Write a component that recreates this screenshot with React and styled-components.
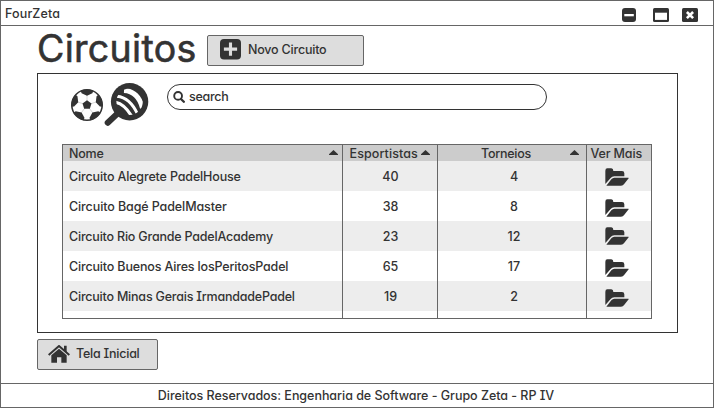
import React from "react";
import styled, { createGlobalStyle } from "styled-components";

const ink = "#333";
const line = "#666";

const GlobalStyle = createGlobalStyle`
  *, *::before, *::after { box-sizing: border-box; }
  body {
    margin: 0;
    background: #fff;
    color: ${ink};
    font: 500 12.5px/16px Inter, "Liberation Sans", sans-serif;
    font-feature-settings: "cv11", "cv08";
  }
  svg { display: block; flex: none; }
`;

const Window = styled.div`
  display: flex;
  flex-direction: column;
  width: 714px;
  height: 408px;
  border: 1px solid ${line};
  background: #fff;
`;

const TitleBar = styled.header`
  display: flex;
  align-items: center;
  justify-content: space-between;
  height: 25px;
  padding: 2px 15px 0 4px;
  border-bottom: 1px solid ${line};
`;

const WindowControls = styled.div`
  display: flex;
  align-items: center;
  padding-top: 2px;
`;

const ControlIcon = styled.svg`
  margin-left: ${(p) => p.$gap || 0}px;
`;

const Label = styled.span`
  white-space: nowrap;
  letter-spacing: ${(p) => p.$track || 0}px;
`;

const Main = styled.main`
  flex: 1;
  display: flex;
  flex-direction: column;
  align-items: flex-start;
  padding-left: 36px;
`;

const Heading = styled.div`
  display: flex;
  align-items: flex-start;
  height: 47px;
`;

const PageTitle = styled.h1`
  width: 170px;
  margin: 0;
  font-size: 37.5px;
  font-weight: 400;
  line-height: 46px;
  letter-spacing: 0.3px;
  white-space: nowrap;
  -webkit-text-stroke: 0.6px ${ink};
`;

const Button = styled.button`
  display: flex;
  align-items: center;
  width: ${(p) => p.$width}px;
  height: 31px;
  margin: ${(p) => p.$top}px 0 0;
  padding: 0 0 2px ${(p) => p.$inset}px;
  gap: ${(p) => p.$gap}px;
  border: 1px solid ${line};
  border-radius: 2px;
  background: #ddd;
  color: inherit;
  font: inherit;
  font-feature-settings: inherit;
`;

const Panel = styled.section`
  width: 641px;
  height: 260px;
  border: 1px solid ${ink};
  padding: 7px 24px 0;
`;

const SearchRow = styled.div`
  display: flex;
  align-items: flex-start;
  height: 63px;
  padding-left: 8px;
`;

const SportIcons = styled.div`
  display: flex;
  width: 97px;
`;

const SearchField = styled.div`
  display: flex;
  align-items: center;
  gap: 4px;
  width: 380px;
  height: 26px;
  margin-top: 3px;
  padding-left: 5px;
  border: 1px solid ${ink};
  border-radius: 13px;
`;

const Table = styled.div`
  display: flex;
  width: 590px;
  height: 175px;
  border: 1px solid ${line};
`;

const Column = styled.div`
  width: ${(p) => p.$width}px;
  border-right: 1px solid ${line};
  &:last-child { border-right: 0; }
`;

const HeadCell = styled.div`
  display: flex;
  align-items: center;
  height: 16px;
  padding: 0 ${(p) => p.$end || 4}px 0 ${(p) => p.$inset}px;
  background: #ccc;
`;

const HeadText = styled.div`
  flex: 1;
  padding-top: 2px;
  text-align: ${(p) => p.$align || "left"};
`;

const Cell = styled.div`
  display: flex;
  align-items: center;
  justify-content: ${(p) => (p.$center ? "center" : "flex-start")};
  height: 30px;
  padding: 2px 0 0 ${(p) => p.$inset || 0}px;
  &:nth-child(even) { background: #ededed; }
`;

const FolderCell = styled(Cell)`
  align-items: flex-start;
  padding: ${(p) => p.$drop}px 0 0 18px;
`;

const Footer = styled.footer`
  display: flex;
  align-items: center;
  justify-content: center;
  height: 24px;
  padding-right: 2px;
  border-top: 1px solid ${line};
`;

const SortArrow = () => (
  <svg width="9" height="6" viewBox="0 0 9 6">
    <path d="M4.5 0 9 4.2V5H0v-.8z" fill={ink} />
  </svg>
);

const FolderIcon = () => (
  <svg width="24" height="18" viewBox="0 0 72 54" fill={ink}>
    <path d="M1 48V8Q1 1 7 1h12q6 0 6 8h26q7 0 7 7v9H28q-7 0-11 5z" />
    <path d="M4 53 19 34q4-5 9-5h42q2 0 1 2L58 47q-4 6-10 6z" />
  </svg>
);

const PlusIcon = () => (
  <svg width="21" height="21" viewBox="0 0 21 21">
    <rect width="21" height="20.5" rx="4" fill={ink} />
    <path d="M10.5 3.5v13.2M3.9 10.1h13.2" stroke="#ddd" strokeWidth="3.1" />
  </svg>
);

const HomeIcon = () => (
  <svg width="22" height="18" viewBox="0 0 66 54" fill={ink}>
    <path d="M2 30 33 3 64 30" fill="none" stroke={ink} strokeWidth="6" />
    <path d="M48 2h8v20l-8-7zM10 31 33 11 56 31v22H40V37H27v16H10z" />
  </svg>
);

const SearchIcon = () => (
  <svg width="12" height="12" viewBox="0 0 12 12" fill="none" stroke={ink}>
    <circle cx="5.1" cy="4.9" r="3.9" strokeWidth="1.9" />
    <path d="m8 8 2.8 2.8" strokeWidth="2.3" strokeLinecap="round" />
  </svg>
);

const BallIcon = () => (
  <svg width="34" height="46" viewBox="-17 -24 34 46">
    <clipPath id="ball"><circle r="15.5" /></clipPath>
    <circle r="15.2" fill="#fff" stroke={ink} strokeWidth="1.6" />
    <g clipPath="url(#ball)" fill={ink}>
      <path d="M0-4.7 4.5-1.4 2.8 3.8h-5.6L-4.5-1.4z" />
      {[0, 72, 144, 216, 288].map((a) => (
        <g key={a} transform={`rotate(${a})`}>
          <path d="M-7-16h14l-1.6 4.2L0-9.2l-5.4-2.6z" />
          <path d="M0-4v-7" stroke={ink} strokeWidth="0.6" opacity="0.3" />
        </g>
      ))}
    </g>
  </svg>
);

const RacketIcon = () => (
  <svg width="46" height="46" viewBox="0 0 46 46" fill="none" stroke={ink}>
    <clipPath id="head"><circle cx="25.6" cy="20.7" r="13.2" /></clipPath>
    <path d="m13 33-9.3 8.8" strokeWidth="6" strokeLinecap="round" />
    <circle cx="25.6" cy="20.7" r="18.7" fill={ink} stroke="none" />
    <g clipPath="url(#head)" stroke="#fff">
      <path d="M20 9.5Q34 10 38.5 27" strokeWidth="5" />
      <path d="M13 15.2Q26 16.5 33.5 33" strokeWidth="3" />
      <path d="M11 21.2Q20 22.5 27.5 35" strokeWidth="3.2" />
    </g>
  </svg>
);

const rows = [
  { name: "Circuito Alegrete PadelHouse", track: -0.15, players: 40, events: 4, drop: 7 },
  { name: "Circuito Bagé PadelMaster", track: -0.1, players: 38, events: 8, drop: 8 },
  { name: "Circuito Rio Grande PadelAcademy", track: -0.2, players: 23, events: 12, drop: 6 },
  { name: "Circuito Buenos Aires losPeritosPadel", track: -0.16, players: 65, events: 17, drop: 8 },
  { name: "Circuito Minas Gerais IrmandadePadel", track: -0.21, players: 19, events: 2, drop: 8 },
];

export default function App() {
  return (
    <>
      <GlobalStyle />
      <Window>
        <TitleBar>
          <Label $track={0.2}>FourZeta</Label>
          <WindowControls>
            <ControlIcon width="14" height="14">
              <rect width="14" height="14" rx="3" fill={ink} />
              <rect x="2.3" y="6" width="9.5" height="2.3" fill="#fff" />
            </ControlIcon>
            <ControlIcon width="16" height="14" $gap={17}>
              <rect width="16" height="14" rx="1.5" fill={ink} />
              <rect x="2" y="4.7" width="12" height="7.2" fill="#fff" />
            </ControlIcon>
            <ControlIcon width="16" height="14" $gap={13}>
              <rect width="16" height="14" rx="1.5" fill={ink} />
              <path d="m4.9 4 6.2 6.2m0-6.2-6.2 6.2" stroke="#fff" strokeWidth="2.6" />
            </ControlIcon>
          </WindowControls>
        </TitleBar>
        <Main>
          <Heading>
            <PageTitle>Circuitos</PageTitle>
            <Button $width={157} $top={9} $inset={12} $gap={7}>
              <PlusIcon />
              <Label $track={-0.2}>Novo Circuito</Label>
            </Button>
          </Heading>
          <Panel>
            <SearchRow>
              <SportIcons>
                <BallIcon />
                <RacketIcon />
              </SportIcons>
              <SearchField>
                <SearchIcon />
                <Label $track={-0.28}>search</Label>
              </SearchField>
            </SearchRow>
            <Table>
              <Column $width={280}>
                <HeadCell $inset={6}>
                  <HeadText><Label $track={-0.2}>Nome</Label></HeadText>
                  <SortArrow />
                </HeadCell>
                {rows.map((r) => (
                  <Cell key={r.name} $inset={6}><Label $track={r.track}>{r.name}</Label></Cell>
                ))}
              </Column>
              <Column $width={95}>
                <HeadCell $inset={6.5} $end={7}>
                  <HeadText><Label $track={0.1}>Esportistas</Label></HeadText>
                  <SortArrow />
                </HeadCell>
                {rows.map((r) => (
                  <Cell key={r.name} $center $inset={1}><Label>{r.players}</Label></Cell>
                ))}
              </Column>
              <Column $width={149}>
                <HeadCell $inset={4} $end={7}>
                  <HeadText $align="center"><Label $track={-0.25}>Torneios</Label></HeadText>
                  <SortArrow />
                </HeadCell>
                {rows.map((r) => (
                  <Cell key={r.name} $center $inset={4}><Label>{r.events}</Label></Cell>
                ))}
              </Column>
              <Column $width={64}>
                <HeadCell $inset={3.5}>
                  <HeadText><Label $track={-0.15}>Ver Mais</Label></HeadText>
                </HeadCell>
                {rows.map((r) => (
                  <FolderCell key={r.name} $drop={r.drop}><FolderIcon /></FolderCell>
                ))}
              </Column>
            </Table>
          </Panel>
          <Button $width={121} $top={6} $inset={10} $gap={6}>
            <HomeIcon />
            <Label $track={-0.23}>Tela Inicial</Label>
          </Button>
        </Main>
        <Footer>
          <Label $track={-0.03}>Direitos Reservados: Engenharia de Software - Grupo Zeta - RP IV</Label>
        </Footer>
      </Window>
    </>
  );
}
